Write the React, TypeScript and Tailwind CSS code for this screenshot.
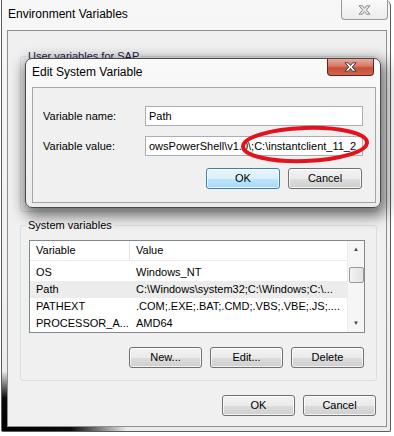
import type { ReactNode } from 'react'

function CloseGlyph({ fill, stroke }: { fill: string; stroke: string }) {
  return (
    <svg width="13" height="10" viewBox="0 0 13 10">
      <path
        d="M1 0.8 L4.4 0.8 L6.5 3.4 L8.6 0.8 L12 0.8 L8.3 5 L12 9.2 L8.6 9.2 L6.5 6.6 L4.4 9.2 L1 9.2 L4.7 5 Z"
        fill={fill}
        stroke={stroke}
        strokeWidth="1"
        strokeLinejoin="round"
      />
    </svg>
  )
}

function Btn({ children, primary = false, w = 'w-[73px]' }: { children: ReactNode; primary?: boolean; w?: string }) {
  return (
    <div
      className={`${w} h-[21px] rounded-[3px] border flex items-center justify-center text-[11px] text-black shadow-[inset_0_0_0_1px_rgba(255,255,255,0.75)] ${
        primary
          ? 'border-[#3c7fb1] bg-[linear-gradient(#eaf6fd_0%,#d9f0fc_50%,#bee6fd_50%,#a7d9f5_100%)]'
          : 'border-[#707070] bg-[linear-gradient(#f2f2f2_0%,#ebebeb_50%,#dddddd_50%,#cfcfcf_100%)]'
      }`}
    >
      {children}
    </div>
  )
}

const rows = [
  { name: 'OS', value: 'Windows_NT' },
  { name: 'Path', value: 'C:\\Windows\\system32;C:\\Windows;C:\\...', selected: true },
  { name: 'PATHEXT', value: '.COM;.EXE;.BAT;.CMD;.VBS;.VBE;.JS;....' },
  { name: 'PROCESSOR_A...', value: 'AMD64' },
]

export default function App() {
  return (
    <div className="relative w-[394px] h-[436px] overflow-hidden bg-white font-['Liberation_Sans',Arial,sans-serif] text-[11px] text-black">
      {/* Environment Variables window */}
      <div className="ml-[1px] w-[390px] h-[432px] border-x border-b border-[#5c5c5c] rounded-tr-[6px] rounded-b-[2px] flex flex-col pl-[5px] pr-[3px] pb-[4px] bg-[radial-gradient(ellipse_125px_60px_at_0%_100%,#000_0%,#0a0a0a_55%,rgba(0,0,0,0)_100%),linear-gradient(#f7f7f7,#ebebeb)]">
        <div className="h-[30px] flex items-start justify-between">
          <div className="pl-[1px] pt-[7px] text-[12px] leading-[14px]">Environment Variables</div>
          <div className="w-[47px] h-[20px] mr-[-1px] border-x border-b border-[#9a9a9a] rounded-b-[4px] bg-[linear-gradient(#fbfbfb,#ececec)] flex items-center justify-center">
            <CloseGlyph fill="#e8e8e8" stroke="#8a8a8a" />
          </div>
        </div>

        <div className="flex-1 border border-[#8e8f8f] bg-[#f0f0f0] flex flex-col">
          {/* User variables */}
          <fieldset className="mt-[18px] ml-[12px] w-[357px] h-[163px] border border-[#d5dfe5] rounded-[3px]">
            <legend className="ml-[5px] px-[2px] leading-[14px] text-[#1a1a4d]">User variables for SAP</legend>
          </fieldset>

          {/* System variables */}
          <fieldset className="mt-[6px] ml-[12px] w-[357px] h-[163px] border border-[#d5dfe5] rounded-[3px] flex flex-col">
            <legend className="ml-[5px] px-[2px] leading-[14px]">System variables</legend>
            <div className="mt-[8px] ml-[8px] w-[336px] h-[93px] border border-[#828790] bg-white flex overflow-hidden">
              <div className="flex-1 flex flex-col">
                <div className="h-[21px] flex border-b border-[#ececec]">
                  <div className="w-[100px] pl-[6px] flex items-center border-r border-[#e5e5e5]">Variable</div>
                  <div className="flex-1 pl-[6px] flex items-center">Value</div>
                </div>
                <div className="pt-[3px] flex flex-col">
                  {rows.map((r) => (
                    <div key={r.name} className={`h-[17px] flex items-center ${r.selected ? 'bg-[#ececec]' : ''}`}>
                      <div className="w-[100px] pl-[6px] whitespace-nowrap">{r.name}</div>
                      <div className="flex-1 pl-[6px] whitespace-nowrap">{r.value}</div>
                    </div>
                  ))}
                </div>
              </div>
              <div className="w-[17px] bg-[#f6f6f6] border-l border-[#ededed] flex flex-col items-center">
                <div className="h-[17px] flex items-center justify-center text-[6px] text-[#444]">▲</div>
                <div className="mt-[9px] w-[15px] h-[16px] rounded-[2px] border border-[#9b9b9b] bg-[linear-gradient(90deg,#f3f3f3,#e2e2e2)]" />
                <div className="flex-1" />
                <div className="h-[17px] flex items-center justify-center text-[6px] text-[#444]">▼</div>
              </div>
            </div>
            <div className="mt-[14px] pr-[12px] flex justify-end gap-[8px]">
              <Btn>New...</Btn>
              <Btn>Edit...</Btn>
              <Btn>Delete</Btn>
            </div>
          </fieldset>

          <div className="mt-[14px] pr-[10px] flex justify-end gap-[8px]">
            <Btn>OK</Btn>
            <Btn>Cancel</Btn>
          </div>
        </div>
      </div>

      {/* Edit System Variable dialog (over the window) */}
      <div className="absolute left-[25px] top-[58px] w-[356px] h-[150px] border border-[#4a4a4a] rounded-[7px] bg-[linear-gradient(#fafafa,#ececec)] shadow-[2px_5px_14px_3px_rgba(0,0,0,0.55)] flex flex-col">
        <div className="h-[28px] flex items-start justify-between">
          <div className="pl-[6px] pt-[6px] text-[12px] leading-[14px]">Edit System Variable</div>
          <div className="w-[47px] h-[17px] mr-[6px] border-x border-b border-[#6b2018] rounded-b-[4px] bg-[linear-gradient(#e9a99b_0%,#d87966_45%,#c74f3a_55%,#d4654c_100%)] flex items-center justify-center">
            <CloseGlyph fill="#ffffff" stroke="#3a3a3a" />
          </div>
        </div>
        <div className="flex-1 ml-[6px] mr-[4px] mb-[4px] border border-[#a5a5a5] bg-[#f0f0f0] flex flex-col pt-[18px] pl-[10px] pr-[12px]">
          <div className="flex items-center">
            <div className="w-[102px]">Variable name:</div>
            <div className="w-[218px] h-[20px] border border-[#abadb3] bg-white flex items-center pl-[3px]">Path</div>
          </div>
          <div className="mt-[10px] flex items-center">
            <div className="w-[102px]">Variable value:</div>
            <div className="w-[218px] h-[20px] border border-[#abadb3] bg-white flex items-center pl-[3px] overflow-hidden whitespace-nowrap">
              owsPowerShell\v1.0\;C:\instantclient_11_2
            </div>
          </div>
          <div className="mt-[12px] pr-[1px] flex justify-end gap-[8px]">
            <Btn primary w="w-[74px]">OK</Btn>
            <Btn w="w-[74px]">Cancel</Btn>
          </div>
        </div>
      </div>

      {/* red annotation ring */}
      <svg className="absolute left-[238px] top-[122px]" width="134" height="46" viewBox="0 0 134 46">
        <ellipse cx="67" cy="22.5" rx="62" ry="16.5" fill="none" stroke="#e3121c" strokeWidth="4" transform="rotate(-2 67 22.5)" />
      </svg>
    </div>
  )
}
